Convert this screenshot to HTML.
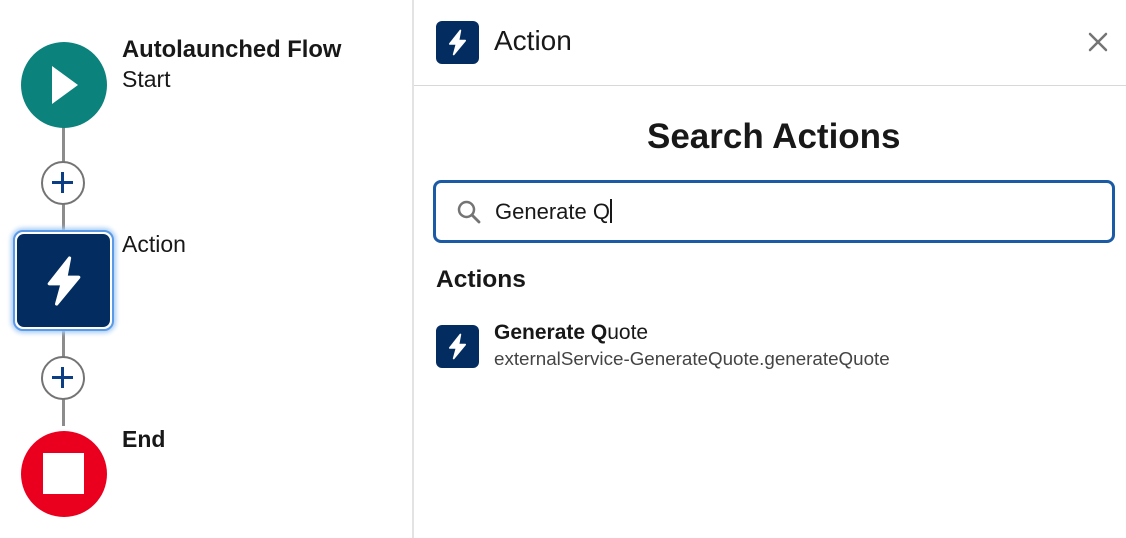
<!DOCTYPE html>
<html><head><meta charset="utf-8"><style>
*{margin:0;padding:0;box-sizing:border-box}
body{width:1126px;height:538px;overflow:hidden;background:#fff;font-family:"Liberation Sans",Arial,sans-serif;color:#181818;position:relative}
.a{position:absolute;white-space:nowrap}
.line{position:absolute;left:62px;width:3px;background:#8c8c8c}
.plus{position:absolute;width:44px;height:44px;border:2.5px solid #747474;border-radius:50%;background:#fff}
.plus:before,.plus:after{content:"";position:absolute;background:#0b3e84}
.plus:before{left:9px;top:18px;width:21px;height:3px}
.plus:after{left:18px;top:9px;width:3px;height:21px}
</style></head><body>
<div class="line" style="top:126px;height:40px"></div>
<div class="line" style="top:200px;height:34px"></div>
<div class="line" style="top:326px;height:34px"></div>
<div class="line" style="top:396px;height:30px"></div>
<div class="a" style="left:21px;top:42px;width:86px;height:86px;border-radius:50%;background:#0b827c"></div>
<svg class="a" style="left:50px;top:64px" width="30" height="42" viewBox="0 0 30 42"><path d="M2 2 L28 21 L2 40 Z" fill="#fff"/></svg>
<div class="a" style="left:122px;top:36px;font-size:23.8px;font-weight:bold">Autolaunched Flow</div>
<div class="a" style="left:122px;top:66px;font-size:23px">Start</div>
<div class="plus" style="left:41px;top:161px"></div>
<div class="a" style="left:13px;top:230px;width:101px;height:101px;border-radius:10px;border:2px solid #5a9ae6;box-shadow:0 0 5px 2px #a9cdf5;background:#fff"></div>
<div class="a" style="left:17px;top:234px;width:93px;height:93px;border-radius:7px;background:#032d60"></div>
<svg class="a" style="left:42px;top:254px" width="44" height="54" viewBox="0 0 24 28"><path d="M15 1.5 L4 15.5 H11 L8 26.5 L20 12 H13 Z" fill="#fff" stroke="#fff" stroke-width="1.8" stroke-linejoin="round"/></svg>
<div class="a" style="left:122px;top:231px;font-size:23px">Action</div>
<div class="plus" style="left:41px;top:356px"></div>
<div class="a" style="left:21px;top:431px;width:86px;height:86px;border-radius:50%;background:#ea001e"></div>
<div class="a" style="left:43px;top:453px;width:41px;height:41px;background:#fff"></div>
<div class="a" style="left:122px;top:426px;font-size:23px;font-weight:bold">End</div>

<div class="a" style="left:412px;top:0;width:2px;height:538px;background:#e3e3e3"></div>
<div class="a" style="left:414px;top:85px;width:712px;height:1px;background:#d8d8d8"></div>
<div class="a" style="left:436px;top:21px;width:43px;height:43px;border-radius:6px;background:#032d60"></div>
<svg class="a" style="left:446px;top:29px" width="23" height="27" viewBox="0 0 24 28"><path d="M15 1.5 L4 15.5 H11 L8 26.5 L20 12 H13 Z" fill="#fff" stroke="#fff" stroke-width="1.8" stroke-linejoin="round"/></svg>
<div class="a" style="left:494px;top:25px;font-size:28px">Action</div>
<svg class="a" style="left:1088px;top:32px" width="20" height="20" viewBox="0 0 20 20"><path d="M2 2L18 18M18 2L2 18" stroke="#747474" stroke-width="2.5" stroke-linecap="round"/></svg>
<div class="a" style="left:647px;top:117px;font-size:35px;font-weight:bold">Search Actions</div>
<div class="a" style="left:433px;top:180px;width:682px;height:63px;border:3px solid #1b5ba6;border-radius:8px"></div>
<svg class="a" style="left:456px;top:199px" width="26" height="26" viewBox="0 0 26 26"><circle cx="10.5" cy="10.5" r="7.5" fill="none" stroke="#747474" stroke-width="2.5"/><path d="M16 16L23 23" stroke="#747474" stroke-width="2.8" stroke-linecap="round"/></svg>
<div class="a" style="left:495px;top:199px;font-size:22px">Generate Q<span style="display:inline-block;width:2px;height:24px;background:#181818;vertical-align:-4px"></span></div>
<div class="a" style="left:436px;top:266px;font-size:24.5px;font-weight:bold">Actions</div>
<div class="a" style="left:436px;top:325px;width:43px;height:43px;border-radius:6px;background:#032d60"></div>
<svg class="a" style="left:446px;top:333px" width="23" height="27" viewBox="0 0 24 28"><path d="M15 1.5 L4 15.5 H11 L8 26.5 L20 12 H13 Z" fill="#fff" stroke="#fff" stroke-width="1.8" stroke-linejoin="round"/></svg>
<div class="a" style="left:494px;top:321px;font-size:21px"><b>Generate Q</b>uote</div>
<div class="a" style="left:494px;top:348px;font-size:18.8px;color:#444">externalService-GenerateQuote.generateQuote</div>
</body></html>
